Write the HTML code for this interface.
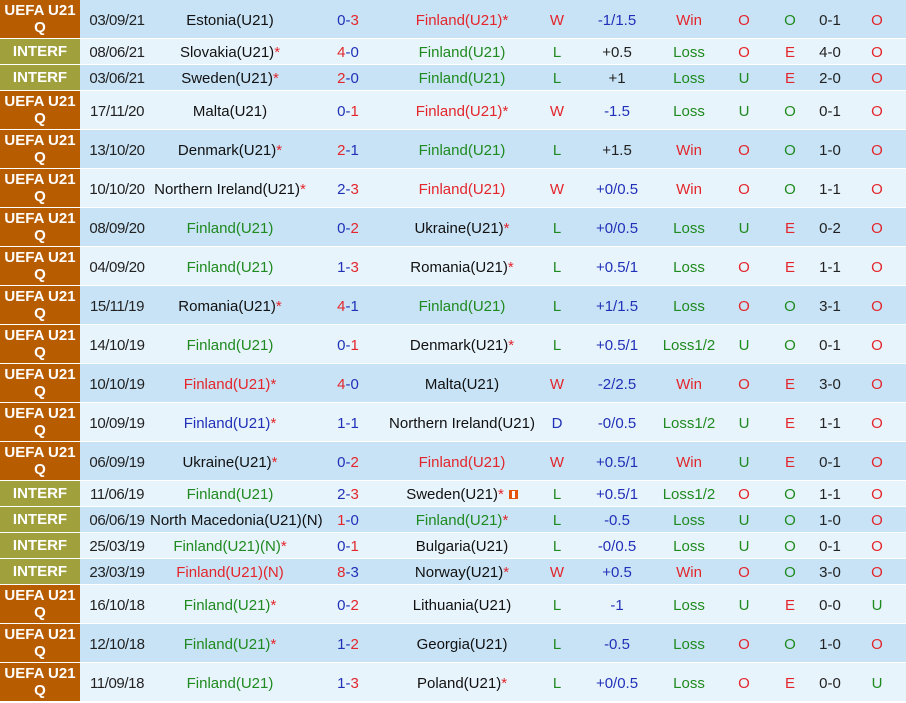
<!DOCTYPE html>
<html><head><meta charset="utf-8">
<style>
html,body{margin:0;padding:0;background:#fff;}
body{width:906px;height:703px;overflow:hidden;font-family:"Liberation Sans",Arial,sans-serif;font-size:15px;}
table{border-collapse:collapse;table-layout:fixed;width:906px;}
td{padding:2px 0 0 0;text-align:center;white-space:nowrap;overflow:visible;border-bottom:1px solid #fff;color:#111;vertical-align:middle;}
tr.u td{height:36px;}
tr.i td{height:23px;}
tr.d td{background:#C8E3F6;}
tr.l td{background:#E8F4FC;}
tr td.lg{color:#fff;font-weight:bold;font-size:15px;line-height:17px;white-space:normal;padding-top:0;}
tr.u td.lg{background:#B85C00;height:38px;}
tr.i td.lg{background:#A0A03C;height:25px;}
.r{color:#E3262B}.g{color:#1F8A1F}.b{color:#2030B8}.k{color:#222}
.s{color:#E3262B}
td.dt{color:#222;padding-left:4px;letter-spacing:-0.4px}
.ic{display:inline-block;width:9px;height:9px;background:#E5540E;position:relative;vertical-align:0px;margin-left:5px}
.ic:after{content:"";position:absolute;left:3px;top:1px;width:3px;height:7px;background:#fff}
</style></head><body>
<table>
<colgroup><col style="width:80px"><col style="width:70px"><col style="width:160px"><col style="width:76px"><col style="width:152px"><col style="width:38px"><col style="width:82px"><col style="width:62px"><col style="width:48px"><col style="width:44px"><col style="width:36px"><col style="width:58px"></colgroup>
<tr class="u d"><td class="lg">UEFA U21 Q</td><td class="dt">03/09/21</td><td>Estonia(U21)</td><td><span class="b">0</span><span class="b">-</span><span class="r">3</span></td><td><span class="r">Finland(U21)</span><span class="s">*</span></td><td class="r">W</td><td class="b">-1/1.5</td><td class="r">Win</td><td class="r">O</td><td class="g">O</td><td class="k">0-1</td><td class="r">O</td></tr>
<tr class="i l"><td class="lg">INTERF</td><td class="dt">08/06/21</td><td>Slovakia(U21)<span class="s">*</span></td><td><span class="r">4</span><span class="b">-</span><span class="b">0</span></td><td class="g">Finland(U21)</td><td class="g">L</td><td class="k">+0.5</td><td class="g">Loss</td><td class="r">O</td><td class="r">E</td><td class="k">4-0</td><td class="r">O</td></tr>
<tr class="i d"><td class="lg">INTERF</td><td class="dt">03/06/21</td><td>Sweden(U21)<span class="s">*</span></td><td><span class="r">2</span><span class="b">-</span><span class="b">0</span></td><td class="g">Finland(U21)</td><td class="g">L</td><td class="k">+1</td><td class="g">Loss</td><td class="g">U</td><td class="r">E</td><td class="k">2-0</td><td class="r">O</td></tr>
<tr class="u l"><td class="lg">UEFA U21 Q</td><td class="dt">17/11/20</td><td>Malta(U21)</td><td><span class="b">0</span><span class="b">-</span><span class="r">1</span></td><td><span class="r">Finland(U21)</span><span class="s">*</span></td><td class="r">W</td><td class="b">-1.5</td><td class="g">Loss</td><td class="g">U</td><td class="g">O</td><td class="k">0-1</td><td class="r">O</td></tr>
<tr class="u d"><td class="lg">UEFA U21 Q</td><td class="dt">13/10/20</td><td>Denmark(U21)<span class="s">*</span></td><td><span class="r">2</span><span class="b">-</span><span class="b">1</span></td><td class="g">Finland(U21)</td><td class="g">L</td><td class="k">+1.5</td><td class="r">Win</td><td class="r">O</td><td class="g">O</td><td class="k">1-0</td><td class="r">O</td></tr>
<tr class="u l"><td class="lg">UEFA U21 Q</td><td class="dt">10/10/20</td><td>Northern Ireland(U21)<span class="s">*</span></td><td><span class="b">2</span><span class="b">-</span><span class="r">3</span></td><td class="r">Finland(U21)</td><td class="r">W</td><td class="b">+0/0.5</td><td class="r">Win</td><td class="r">O</td><td class="g">O</td><td class="k">1-1</td><td class="r">O</td></tr>
<tr class="u d"><td class="lg">UEFA U21 Q</td><td class="dt">08/09/20</td><td class="g">Finland(U21)</td><td><span class="b">0</span><span class="b">-</span><span class="r">2</span></td><td>Ukraine(U21)<span class="s">*</span></td><td class="g">L</td><td class="b">+0/0.5</td><td class="g">Loss</td><td class="g">U</td><td class="r">E</td><td class="k">0-2</td><td class="r">O</td></tr>
<tr class="u l"><td class="lg">UEFA U21 Q</td><td class="dt">04/09/20</td><td class="g">Finland(U21)</td><td><span class="b">1</span><span class="b">-</span><span class="r">3</span></td><td>Romania(U21)<span class="s">*</span></td><td class="g">L</td><td class="b">+0.5/1</td><td class="g">Loss</td><td class="r">O</td><td class="r">E</td><td class="k">1-1</td><td class="r">O</td></tr>
<tr class="u d"><td class="lg">UEFA U21 Q</td><td class="dt">15/11/19</td><td>Romania(U21)<span class="s">*</span></td><td><span class="r">4</span><span class="b">-</span><span class="b">1</span></td><td class="g">Finland(U21)</td><td class="g">L</td><td class="b">+1/1.5</td><td class="g">Loss</td><td class="r">O</td><td class="g">O</td><td class="k">3-1</td><td class="r">O</td></tr>
<tr class="u l"><td class="lg">UEFA U21 Q</td><td class="dt">14/10/19</td><td class="g">Finland(U21)</td><td><span class="b">0</span><span class="b">-</span><span class="r">1</span></td><td>Denmark(U21)<span class="s">*</span></td><td class="g">L</td><td class="b">+0.5/1</td><td class="g">Loss1/2</td><td class="g">U</td><td class="g">O</td><td class="k">0-1</td><td class="r">O</td></tr>
<tr class="u d"><td class="lg">UEFA U21 Q</td><td class="dt">10/10/19</td><td><span class="r">Finland(U21)</span><span class="s">*</span></td><td><span class="r">4</span><span class="b">-</span><span class="b">0</span></td><td>Malta(U21)</td><td class="r">W</td><td class="b">-2/2.5</td><td class="r">Win</td><td class="r">O</td><td class="r">E</td><td class="k">3-0</td><td class="r">O</td></tr>
<tr class="u l"><td class="lg">UEFA U21 Q</td><td class="dt">10/09/19</td><td><span class="b">Finland(U21)</span><span class="s">*</span></td><td><span class="b">1-1</span></td><td>Northern Ireland(U21)</td><td class="b">D</td><td class="b">-0/0.5</td><td class="g">Loss1/2</td><td class="g">U</td><td class="r">E</td><td class="k">1-1</td><td class="r">O</td></tr>
<tr class="u d"><td class="lg">UEFA U21 Q</td><td class="dt">06/09/19</td><td>Ukraine(U21)<span class="s">*</span></td><td><span class="b">0</span><span class="b">-</span><span class="r">2</span></td><td class="r">Finland(U21)</td><td class="r">W</td><td class="b">+0.5/1</td><td class="r">Win</td><td class="g">U</td><td class="r">E</td><td class="k">0-1</td><td class="r">O</td></tr>
<tr class="i l"><td class="lg">INTERF</td><td class="dt">11/06/19</td><td class="g">Finland(U21)</td><td><span class="b">2</span><span class="b">-</span><span class="r">3</span></td><td>Sweden(U21)<span class="s">*</span><span class="ic"></span></td><td class="g">L</td><td class="b">+0.5/1</td><td class="g">Loss1/2</td><td class="r">O</td><td class="g">O</td><td class="k">1-1</td><td class="r">O</td></tr>
<tr class="i d"><td class="lg">INTERF</td><td class="dt">06/06/19</td><td>North Macedonia(U21)(N)</td><td><span class="r">1</span><span class="b">-</span><span class="b">0</span></td><td><span class="g">Finland(U21)</span><span class="s">*</span></td><td class="g">L</td><td class="b">-0.5</td><td class="g">Loss</td><td class="g">U</td><td class="g">O</td><td class="k">1-0</td><td class="r">O</td></tr>
<tr class="i l"><td class="lg">INTERF</td><td class="dt">25/03/19</td><td><span class="g">Finland(U21)(N)</span><span class="s">*</span></td><td><span class="b">0</span><span class="b">-</span><span class="r">1</span></td><td>Bulgaria(U21)</td><td class="g">L</td><td class="b">-0/0.5</td><td class="g">Loss</td><td class="g">U</td><td class="g">O</td><td class="k">0-1</td><td class="r">O</td></tr>
<tr class="i d"><td class="lg">INTERF</td><td class="dt">23/03/19</td><td class="r">Finland(U21)(N)</td><td><span class="r">8</span><span class="b">-</span><span class="b">3</span></td><td>Norway(U21)<span class="s">*</span></td><td class="r">W</td><td class="b">+0.5</td><td class="r">Win</td><td class="r">O</td><td class="g">O</td><td class="k">3-0</td><td class="r">O</td></tr>
<tr class="u l"><td class="lg">UEFA U21 Q</td><td class="dt">16/10/18</td><td><span class="g">Finland(U21)</span><span class="s">*</span></td><td><span class="b">0</span><span class="b">-</span><span class="r">2</span></td><td>Lithuania(U21)</td><td class="g">L</td><td class="b">-1</td><td class="g">Loss</td><td class="g">U</td><td class="r">E</td><td class="k">0-0</td><td class="g">U</td></tr>
<tr class="u d"><td class="lg">UEFA U21 Q</td><td class="dt">12/10/18</td><td><span class="g">Finland(U21)</span><span class="s">*</span></td><td><span class="b">1</span><span class="b">-</span><span class="r">2</span></td><td>Georgia(U21)</td><td class="g">L</td><td class="b">-0.5</td><td class="g">Loss</td><td class="r">O</td><td class="g">O</td><td class="k">1-0</td><td class="r">O</td></tr>
<tr class="u l"><td class="lg">UEFA U21 Q</td><td class="dt">11/09/18</td><td class="g">Finland(U21)</td><td><span class="b">1</span><span class="b">-</span><span class="r">3</span></td><td>Poland(U21)<span class="s">*</span></td><td class="g">L</td><td class="b">+0/0.5</td><td class="g">Loss</td><td class="r">O</td><td class="r">E</td><td class="k">0-0</td><td class="g">U</td></tr>
</table>
</body></html>
